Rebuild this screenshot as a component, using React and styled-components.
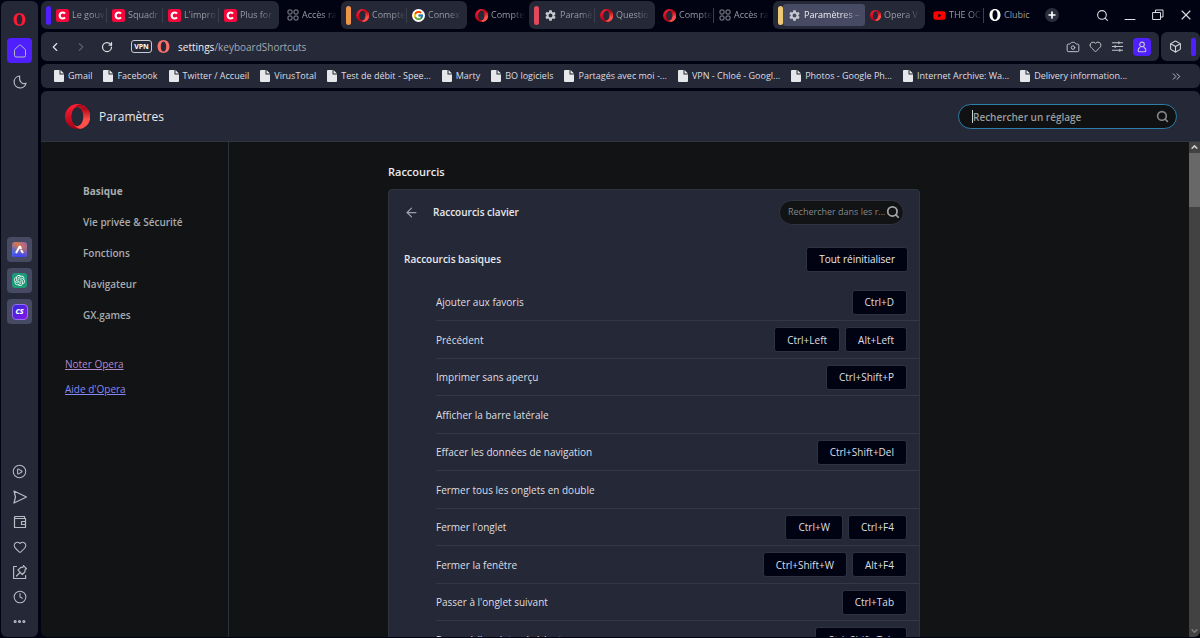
import React from "react";
import styled, { createGlobalStyle } from "styled-components";
import {
	ArrowLeft,
	Box,
	Camera,
	ChevronLeft,
	ChevronRight,
	ChevronsRight,
	CirclePlay,
	Clock4,
	Ellipsis,
	Heart,
	Plus,
	RotateCw,
	Search,
	X,
} from "lucide-react";
import { FaYoutube } from "react-icons/fa";
import { FcGoogle } from "react-icons/fc";
import { MdSettings } from "react-icons/md";
import { SiOpenai } from "react-icons/si";

const tabStrip = [
	{
		color: "#4f1fff",
		tabs: [
			{ icon: "clubic", title: "Le gouv" },
			{ icon: "clubic", title: "Squadr" },
			{ icon: "clubic", title: "L'impro" },
			{ icon: "clubic", title: "Plus for" },
		],
	},
	{ tabs: [{ icon: "grid", title: "Accès ra" }] },
	{
		color: "#f0944a",
		tabs: [
			{ icon: "opera", title: "Compte" },
			{ icon: "google", title: "Connex" },
		],
	},
	{ tabs: [{ icon: "opera", title: "Compte" }] },
	{
		color: "#e2495c",
		tabs: [
			{ icon: "gear", title: "Paramè" },
			{ icon: "opera", title: "Questio" },
		],
	},
	{
		tabs: [
			{ icon: "opera", title: "Compte" },
			{ icon: "grid", title: "Accès ra" },
		],
	},
	{
		color: "#efc873",
		tabs: [
			{ icon: "gear", title: "Paramètres –", active: true },
			{ icon: "operaSmall", title: "Opera V" },
		],
	},
	{
		tabs: [
			{ icon: "youtube", title: "THE OC" },
			{ icon: "operaWhite", title: "Clubic", full: true },
		],
	},
];

const bookmarks = [
	"Gmail",
	"Facebook",
	"Twitter / Accueil",
	"VirusTotal",
	"Test de débit - Spee...",
	"Marty",
	"BO logiciels",
	"Partagés avec moi -...",
	"VPN - Chloé - Googl...",
	"Photos - Google Ph...",
	"Internet Archive: Wa...",
	"Delivery information...",
];

const sections = [
	"Basique",
	"Vie privée & Sécurité",
	"Fonctions",
	"Navigateur",
	"GX.games",
];

const shortcuts = [
	{ label: "Ajouter aux favoris", keys: ["Ctrl+D"] },
	{ label: "Précédent", keys: ["Ctrl+Left", "Alt+Left"] },
	{ label: "Imprimer sans aperçu", keys: ["Ctrl+Shift+P"] },
	{ label: "Afficher la barre latérale", keys: [] },
	{
		label: "Effacer les données de navigation",
		keys: ["Ctrl+Shift+Del"],
	},
	{ label: "Fermer tous les onglets en double", keys: [] },
	{ label: "Fermer l'onglet", keys: ["Ctrl+W", "Ctrl+F4"] },
	{ label: "Fermer la fenêtre", keys: ["Ctrl+Shift+W", "Alt+F4"] },
	{ label: "Passer à l'onglet suivant", keys: ["Ctrl+Tab"] },
	{ label: "Passer à l'onglet précédent", keys: ["Ctrl+Shift+Tab"] },
];

function OperaLogo({ size }) {
	const id = React.useId();
	return (
		<svg width={size} height={size} viewBox="0 0 24 24">
			<defs>
				<linearGradient id={id + "a"} x1="0" y1="0" x2="0" y2="1">
					<stop offset="0" stopColor="#ff2035" />
					<stop offset="1" stopColor="#a70014" />
				</linearGradient>
				<linearGradient id={id + "b"} x1="0" y1="0" x2="0" y2="1">
					<stop offset="0" stopColor="#a80012" />
					<stop offset="0.6" stopColor="#ff4f4a" />
				</linearGradient>
			</defs>
			<path
				fill={`url(#${id}a)`}
				fillRule="evenodd"
				d="M12 0a12 12 0 1 0 0 24 12 12 0 1 0 0-24zm0 3c3.200 0 5.600 4 5.600 9s-2.400 9-5.600 9-5.600-4-5.600-9 2.400-9 5.600-9z"
			/>
			<path
				fill={`url(#${id}b)`}
				d="M8 4.800C9.200 3.400 10.700 2.600 12.300 2.600c3.500 0 6.300 4.200 6.300 9.400s-2.800 9.400-6.300 9.400c-1.600 0-3.100-.8-4.300-2.200 1.900 3 4.800 4.800 7.900 4.500A12 12 0 0 0 20 3.100C18.400 1.600 16.500.600 15 .4 12 .5 9.600 2 8 4.800z"
			/>
			<path
				fill="#252836"
				d="M12 3c3.200 0 5.600 4 5.600 9s-2.400 9-5.600 9-5.600-4-5.600-9 2.400-9 5.600-9z"
			/>
			<path
				fill={`url(#${id}b)`}
				d="M17.600 12c0 5-2.400 9-5.600 9 1 1.500 3 2 4.500 2.100A12 12 0 0 0 20 3.100L15 4.200c1.600 1.600 2.600 4.500 2.600 7.800z"
			/>
		</svg>
	);
}

function OperaRing({ size, color }) {
	return (
		<svg width={size} height={size} viewBox="0 0 24 24">
			<path
				fill={color}
				fillRule="evenodd"
				d="M12 0C5.400 0 1 5.200 1 12s4.400 12 11 12 11-5.200 11-12S18.600 0 12 0zm0 2.600c3.100 0 5 4 5 9.400s-1.900 9.400-5 9.400-5-4-5-9.400 1.900-9.400 5-9.400z"
			/>
		</svg>
	);
}

function GridIcon() {
	return (
		<svg width="12" height="12" viewBox="0 0 12 12" fill="none" stroke="#8d8f99">
			<rect x="1" y="1" width="4" height="4" rx="1" />
			<rect x="7" y="1" width="4" height="4" rx="1" />
			<rect x="1" y="7" width="4" height="4" rx="1" />
			<rect x="7" y="7" width="4" height="4" rx="1" />
		</svg>
	);
}

function ClubicIcon() {
	return (
		<svg width="13" height="13" viewBox="0 0 13 13">
			<rect width="13" height="13" rx="2" fill="#f5063b" />
			<path
				d="M9 4.600A3 3 0 1 0 9 8.400"
				fill="none"
				stroke="#fff"
				strokeWidth="2.2"
			/>
		</svg>
	);
}

function TabIcon({ name }) {
	switch (name) {
		case "clubic":
			return <ClubicIcon />;
		case "grid":
			return <GridIcon />;
		case "google":
			return (
				<RoundIcon>
					<FcGoogle size={11} />
				</RoundIcon>
			);
		case "gear":
			return <MdSettings size={13} color="#c9cad0" />;
		case "youtube":
			return <FaYoutube size={13} color="#ff0000" />;
		case "operaWhite":
			return <OperaRing size={12} color="#ffffff" />;
		case "operaSmall":
			return <OperaLogo size={11} />;
		default:
			return <OperaLogo size={13} />;
	}
}

function FileIcon() {
	return (
		<svg width="10" height="12" viewBox="0 0 10 12">
			<path
				fill="#e6e7ea"
				d="M1 0h4.500v4.500H10V11a1 1 0 0 1-1 1H1a1 1 0 0 1-1-1V1a1 1 0 0 1 1-1zM6.500 0L10 3.500H6.500z"
			/>
		</svg>
	);
}

function LineIcon({ size = 14, width = 1, children }) {
	return (
		<svg
			width={size}
			height={size}
			viewBox="0 0 14 14"
			fill="none"
			stroke="currentColor"
			strokeWidth={width}
			strokeLinejoin="round"
			strokeLinecap="round">
			{children}
		</svg>
	);
}

function Sidebar() {
	return (
		<StyledSidebar>
			<SideGroup $top>
				<SideButton aria-label="Opera">
					<OperaRing size={13} color="#fb1b33" />
				</SideButton>
				<SideButton aria-label="Accueil" $bg="#4f1fff">
					<LineIcon>
						<path d="M1.500 6.200c0-.500.200-.900.600-1.200L6.300 1.300c.400-.400 1-.400 1.400 0L11.900 5c.400.300.600.700.600 1.200v5.300a1.500 1.500 0 0 1-1.500 1.500H3a1.500 1.500 0 0 1-1.500-1.500z" />
					</LineIcon>
				</SideButton>
				<SideButton aria-label="Espace">
					<LineIcon width={1.2}>
						<path d="M6.700 1A6 6 0 1 0 13 8.200c-1.200.600-3.200.600-4.600-.600S6.300 3.400 6.700 1z" />
					</LineIcon>
				</SideButton>
			</SideGroup>
			<SideGroup>
				<SideButton aria-label="Aria" $bg="#464a62">
					<svg width="15" height="15" viewBox="0 0 15 15">
						<defs>
							<linearGradient id="aria" x1="0" y1="1" x2="1" y2="0">
								<stop offset="0" stopColor="#5fc4dc" />
								<stop offset="0.3" stopColor="#7a6fa8" />
								<stop offset="0.6" stopColor="#d9754c" />
								<stop offset="1" stopColor="#8d61b0" />
							</linearGradient>
							<linearGradient id="ariaBlue" x1="0" y1="0" x2="0" y2="1">
								<stop offset="0.3" stopColor="#3b55f0" stopOpacity="0" />
								<stop offset="1" stopColor="#3b40ff" />
							</linearGradient>
						</defs>
						<rect width="15" height="15" rx="3" fill="url(#aria)" />
						<rect width="15" height="15" rx="3" fill="url(#ariaBlue)" />
						<path
							d="M4 11l4-7M8 4l1 3M9 8l2 3"
							stroke="#fff"
							strokeWidth="2"
							fill="none"
						/>
					</svg>
				</SideButton>
				<SideButton aria-label="ChatGPT" $bg="#464a62">
					<GptTile>
						<SiOpenai size={11} />
					</GptTile>
				</SideButton>
				<SideButton aria-label="ChatSonic" $bg="#464a62">
					<SonicTile>CS</SonicTile>
				</SideButton>
			</SideGroup>
			<SideGroup $tight>
				<SideButton aria-label="Lecteur">
					<CirclePlay size={15} strokeWidth={1.7} />
				</SideButton>
				<SideButton aria-label="My Flow">
					<LineIcon width={1.2}>
						<path d="M1 1l12.500 6L1 13l1.500-6z" />
					</LineIcon>
				</SideButton>
				<SideButton aria-label="Portefeuille">
					<LineIcon width={1.2}>
						<path d="M1.500 2.500V12.500h11V3.500H2.500a1 1 0 0 1 0-2H11.500v2M12.500 6.500h-4v3h4" />
					</LineIcon>
				</SideButton>
				<SideButton aria-label="Favoris">
					<Heart size={14} strokeWidth={1.8} />
				</SideButton>
				<SideButton aria-label="Pinboards">
					<LineIcon width={1.2}>
						<path d="M3.500 1.500H.600v12h12V10.500M10.500.600l3 3-1.300.700-.400 2.700-2.500 2.500L5 5.200l2.500-2.500 2.500-.600zM7 7.500L3.500 11" />
					</LineIcon>
				</SideButton>
				<SideButton aria-label="Historique">
					<Clock4 size={14} strokeWidth={1.8} />
				</SideButton>
				<SideButton aria-label="Plus">
					<Ellipsis size={15} strokeWidth={3} />
				</SideButton>
			</SideGroup>
		</StyledSidebar>
	);
}

function TabStrip() {
	return (
		<StyledTabStrip>
			{tabStrip.map((group, i) => (
				<TabGroup key={i} $grouped={!!group.color}>
					{group.color && <GroupMark $color={group.color} />}
					{group.tabs.map((tab, j) => (
						<Tab
							key={j}
							$active={tab.active}
							$full={tab.full}
							$divided={!tab.active && j < group.tabs.length - 1}>
							<TabIcon name={tab.icon} />
							<span>{tab.title}</span>
						</Tab>
					))}
				</TabGroup>
			))}
			<NewTab aria-label="Nouvel onglet">
				<Plus size={10} strokeWidth={4} />
			</NewTab>
			<WindowButtons>
				<button aria-label="Rechercher dans les onglets">
					<Search size={13} strokeWidth={2} />
				</button>
				<button aria-label="Réduire">
					<LineIcon>
						<path d="M2 11.500h10" />
					</LineIcon>
				</button>
				<button aria-label="Restaurer">
					<LineIcon>
						<path d="M2 4.500h7.500v7H2zM4.500 4.500v-2.500H12v7H9.500" />
					</LineIcon>
				</button>
				<button aria-label="Fermer">
					<X size={16} strokeWidth={1.7} />
				</button>
			</WindowButtons>
		</StyledTabStrip>
	);
}

function AddressBar() {
	return (
		<Toolbars>
			<Toolbar>
				<NavButton aria-label="Précédent">
					<ChevronLeft size={14} strokeWidth={2} />
				</NavButton>
				<NavButton aria-label="Suivant" disabled>
					<ChevronRight size={14} strokeWidth={2} />
				</NavButton>
				<NavButton aria-label="Recharger">
					<RotateCw size={12} strokeWidth={2.5} />
				</NavButton>
				<Vpn>VPN</Vpn>
				<OperaRing size={13} color="#f8706a" />
				<Url>
					<b>settings</b>/keyboardShortcuts
				</Url>
				<ToolButtons>
					<button aria-label="Capture">
						<Camera size={14} strokeWidth={1.7} />
					</button>
					<button aria-label="Favoris">
						<Heart size={13} strokeWidth={1.8} />
					</button>
					<button aria-label="Configuration facile">
						<LineIcon size={13} width={1.2}>
							<path d="M1.500 3h11M1.500 7h11M1.500 11h11M8.500 2v2M4.500 6v2M9.500 10v2" />
						</LineIcon>
					</button>
					<ProfileButton aria-label="Profil">
						<LineIcon size={12} width={1.3}>
							<circle cx="7" cy="4" r="2.7" />
							<path d="M4.500 7.700C3 8.500 2.500 9.500 2.500 11c0 1 .500 1.500 1.500 1.500h6c1 0 1.500-.500 1.500-1.500 0-1.500-.500-2.500-2-3.300" />
						</LineIcon>
					</ProfileButton>
				</ToolButtons>
			</Toolbar>
			<Extensions>
				<button aria-label="Extensions">
					<Box size={13} strokeWidth={2} />
				</button>
				<span />
			</Extensions>
		</Toolbars>
	);
}

function SettingsHeader() {
	return (
		<StyledHeader>
			<OperaLogo size={25} />
			<h1>Paramètres</h1>
			<SettingSearch>
				<i />
				<input
					type="text"
					aria-label="Rechercher un réglage"
					placeholder="Rechercher un réglage"
				/>
				<Search size={13} strokeWidth={3} />
			</SettingSearch>
		</StyledHeader>
	);
}

function Shortcuts() {
	return (
		<Content>
			<h2>Raccourcis</h2>
			<Card>
				<CardHeader>
					<button aria-label="Retour">
						<ArrowLeft size={15} strokeWidth={2} />
					</button>
					<h3>Raccourcis clavier</h3>
					<CardSearch>
						<input
							type="text"
							aria-label="Rechercher dans les raccourcis"
							placeholder="Rechercher dans les r..."
						/>
						<Search size={14} strokeWidth={3} />
					</CardSearch>
				</CardHeader>
				<CardSection>
					<h3>Raccourcis basiques</h3>
					<KeyButton>Tout réinitialiser</KeyButton>
				</CardSection>
				<ShortcutList>
					{shortcuts.map((item) => (
						<ShortcutRow key={item.label}>
							<p>{item.label}</p>
							{item.keys.map((key) => (
								<KeyButton key={key}>{key}</KeyButton>
							))}
						</ShortcutRow>
					))}
				</ShortcutList>
			</Card>
		</Content>
	);
}

function App() {
	return (
		<Browser>
			<GlobalStyle />
			<Sidebar />
			<Main>
				<TabStrip />
				<AddressBar />
				<Bookmarks>
					{bookmarks.map((name) => (
						<a href="#" key={name}>
							<FileIcon />
							{name}
						</a>
					))}
					<button aria-label="Plus de favoris">
						<ChevronsRight size={13} strokeWidth={1.5} />
					</button>
				</Bookmarks>
				<Page>
					<SettingsHeader />
					<PageBody>
						<Menu>
							<ul>
								{sections.map((name, i) => (
									<MenuItem key={name} $current={i === 0}>
										<a href="#">{name}</a>
									</MenuItem>
								))}
							</ul>
							<HelpLink href="#" $visited>
								Noter Opera
							</HelpLink>
							<HelpLink href="#">Aide d'Opera</HelpLink>
						</Menu>
						<Shortcuts />
						<Scrollbar>
							<LineIcon size={11} width={2}>
								<path d="M4 8l3-3 3 3" />
							</LineIcon>
							<span />
							<LineIcon size={11} width={2}>
								<path d="M4 5l3 3 3-3" opacity="0.4" />
							</LineIcon>
						</Scrollbar>
					</PageBody>
				</Page>
			</Main>
		</Browser>
	);
}

const GlobalStyle = createGlobalStyle`
	* {
		box-sizing: border-box;
		margin: 0;
		padding: 0;
	}

	body {
		background-color: #010312;
		color: #e8e9ed;
		font-family: "Open Sans", "Noto Sans", sans-serif;
		font-size: 10px;
		line-height: 14px;
	}

	button,
	input {
		font: inherit;
		color: inherit;
		background: none;
		border: none;
		outline: none;
	}

	button {
		display: flex;
		align-items: center;
		justify-content: center;
		cursor: pointer;
	}

	a {
		color: inherit;
		text-decoration: none;
	}

	ul {
		list-style: none;
	}

	svg {
		flex-shrink: 0;
	}
`;

const Browser = styled.div`
	display: flex;
	gap: 3px;
	height: 100vh;
	padding: 1px 0 1px 1px;
	overflow: hidden;
`;

const StyledSidebar = styled.nav`
	display: flex;
	flex-direction: column;
	align-items: center;
	justify-content: space-between;
	width: 37px;
	padding: 6px 0 3px;
	border-radius: 6px;
	background-color: #252836;
	color: #b9bbc4;
`;

const SideGroup = styled.div`
	display: flex;
	flex-direction: column;
	gap: ${(props) => (props.$tight ? "0" : "6px")};
	padding-bottom: ${(props) => (props.$top ? "8px" : "0")};
`;

const SideButton = styled.button`
	width: 25px;
	height: 25px;
	border-radius: 4px;
	background-color: ${(props) => props.$bg || "transparent"};
`;

const GptTile = styled.span`
	display: flex;
	align-items: center;
	justify-content: center;
	width: 15px;
	height: 15px;
	border-radius: 3px;
	background-color: #1f9a78;
	color: white;
`;

const SonicTile = styled.span`
	width: 16px;
	height: 16px;
	border: 1px solid #9a6cf0;
	border-radius: 4px;
	background: linear-gradient(135deg, #2c2bd8, #8a14e8);
	color: white;
	font-size: 7px;
	font-weight: 800;
	font-style: italic;
	line-height: 14px;
`;

const Main = styled.div`
	display: flex;
	flex-direction: column;
	flex: 1;
	min-width: 0;
	gap: 3px;
`;

const StyledTabStrip = styled.header`
	display: flex;
	align-items: center;
	gap: 3px;
	height: 28px;
	color: #999ba5;
	font-size: 9px;
`;

const TabGroup = styled.div`
	display: flex;
	align-items: center;
	height: 28px;
	padding: ${(props) => (props.$grouped ? "0 4px 0 5px" : "0")};
	border-radius: 6px;
	background-color: ${(props) =>
		props.$grouped ? "#252836" : "transparent"};
`;

const GroupMark = styled.span`
	width: 5px;
	height: 19px;
	border-radius: 3px;
	background-color: ${(props) => props.$color};
`;

const Tab = styled.button`
	justify-content: flex-start;
	gap: 3px;
	width: ${(props) => (props.$active ? "82px" : "56px")};
	height: ${(props) => (props.$active ? "22px" : "15px")};
	padding-left: 5px;
	border-right: 1px solid
		${(props) => (props.$divided ? "#3b3e4e" : "transparent")};
	border-radius: ${(props) => (props.$active ? "3px" : "0")};
	background-color: ${(props) =>
		props.$active ? "#464a62" : "transparent"};
	color: ${(props) => (props.$active ? "#eeeef2" : "inherit")};

	> span:last-child {
		flex: 1;
		text-align: left;
		white-space: nowrap;
		mask-image: ${(props) =>
			props.$full
				? "none"
				: "linear-gradient(to right, black 60%, transparent)"};
	}
`;

const RoundIcon = styled.span`
	display: flex;
	flex: none;
	align-items: center;
	justify-content: center;
	width: 13px;
	height: 13px;
	border-radius: 50%;
	background-color: white;
`;

const NewTab = styled.button`
	width: 14px;
	height: 14px;
	margin-left: 2px;
	border-radius: 50%;
	background-color: #2b2e3c;
	color: white;
`;

const WindowButtons = styled.div`
	display: flex;
	gap: 14px;
	margin-left: auto;
	padding-right: 7px;
	color: #dcdde2;

	button {
		width: 14px;
		height: 14px;
	}
`;

const Toolbars = styled.div`
	display: flex;
	gap: 2px;
`;

const Toolbar = styled.div`
	display: flex;
	align-items: center;
	flex: 1;
	height: 29px;
	padding: 0 8px 0 7px;
	border-radius: 6px;
	background-color: #262937;
`;

const NavButton = styled.button`
	width: 14px;
	height: 14px;
	margin-right: 12px;
	color: #e0e1e6;

	&:disabled {
		color: #5a5d6b;
	}
`;

const Vpn = styled.button`
	width: 21px;
	height: 13px;
	margin: 0 5px;
	border: 1px solid #c9cad0;
	border-radius: 3px;
	color: white;
	font-size: 7px;
	font-weight: 700;
`;

const Url = styled.p`
	flex: 1;
	margin-left: 8px;
	color: #a5a7b1;

	b {
		color: #f2f2f5;
		font-weight: 400;
	}
`;

const ToolButtons = styled.div`
	display: flex;
	align-items: center;
	gap: 9px;
	color: #c2c4cc;
`;

const ProfileButton = styled.button`
	width: 18px;
	height: 18px;
	border-radius: 4px;
	background-color: #4f1fff;
`;

const Extensions = styled.div`
	display: flex;
	align-items: center;
	justify-content: space-between;
	width: 39px;
	padding: 0 4px 0 8px;
	border-radius: 6px;
	background-color: #262937;
	color: #d4d5db;

	span {
		width: 5px;
		height: 18px;
		border-radius: 2px;
		background-color: #4f1fff;
	}
`;

const Bookmarks = styled.div`
	display: flex;
	align-items: center;
	gap: 11px;
	height: 24px;
	padding: 0 17px 0 13px;
	border-radius: 6px;
	background-color: #252836;
	color: #dcdde2;
	font-size: 9px;
	white-space: nowrap;

	a {
		display: flex;
		align-items: center;
		gap: 4px;
	}

	button {
		margin-left: auto;
	}
`;

const Page = styled.div`
	display: flex;
	flex-direction: column;
	flex: 1;
	min-height: 0;
	overflow: hidden;
	border-radius: 6px;
	background-color: #111314;
`;

const StyledHeader = styled.div`
	display: flex;
	align-items: center;
	flex-shrink: 0;
	gap: 9px;
	height: 51px;
	padding: 1px 23px 0 24px;
	border-bottom: 1px solid #2c3541;
	background-color: #252836;

	h1 {
		font-size: 12px;
		font-weight: 400;
		line-height: 18px;
	}
`;

const SettingSearch = styled.label`
	display: flex;
	align-items: center;
	width: 219px;
	height: 25px;
	margin-left: auto;
	padding: 0 7px 0 13px;
	border: 1px solid #2b7fa8;
	border-radius: 13px;
	background-color: #0f1112;
	color: #85878a;

	i {
		width: 1px;
		height: 13px;
		background-color: #d0d0d0;
	}

	input {
		flex: 1;
		min-width: 0;
		font-weight: 600;
	}

	input::placeholder {
		color: #9a9c9e;
	}
`;

const PageBody = styled.div`
	display: flex;
	flex: 1;
	min-height: 0;
`;

const Menu = styled.aside`
	display: flex;
	flex-direction: column;
	align-items: flex-start;
	flex-shrink: 0;
	width: 188px;
	padding: 34px 24px;
	border-right: 1px solid #29313c;

	ul {
		padding: 0 0 21px 18px;
	}
`;

const MenuItem = styled.li`
	color: #a9abad;
	font-weight: ${(props) => (props.$current ? 700 : 600)};
	line-height: 31px;
`;

const HelpLink = styled.a`
	color: ${(props) => (props.$visited ? "#b288cc" : "#8587f5")};
	line-height: 25px;
	text-decoration: underline;
`;

const Content = styled.main`
	flex: 1;
	padding: 21px 24px 0 159px;
	overflow: hidden;

	h2 {
		margin-bottom: 8px;
		font-size: 11px;
		font-weight: 600;
		line-height: 18px;
	}

	h3 {
		flex: 1;
		font-size: 10px;
		font-weight: 600;
	}
`;

const Card = styled.section`
	max-width: 532px;
	border: 1px solid #2c3541;
	border-radius: 4px;
	background-color: #252836;
`;

const CardHeader = styled.div`
	display: flex;
	align-items: center;
	gap: 14px;
	height: 44px;
	padding: 0 15px;

	> button {
		color: #9c9ea8;
	}
`;

const CardSearch = styled.label`
	display: flex;
	align-items: center;
	width: 125px;
	height: 25px;
	padding: 0 4px 0 8px;
	border: 1px solid #30343f;
	border-radius: 13px;
	background-color: #111314;
	color: #a2a4a7;

	input {
		width: 104px;
		flex-shrink: 0;
		font-size: 9px;
	}

	input::placeholder {
		color: #85878a;
	}

	/* the glass sits over the end of the placeholder */
	svg {
		margin-left: -6px;
	}
`;

const CardSection = styled.div`
	display: flex;
	align-items: center;
	height: 50px;
	padding: 0 11px 0 15px;
`;

const KeyButton = styled.button`
	height: 25px;
	padding: 0 12px;
	border: 1px solid #2f3341;
	border-radius: 3px;
	background-color: #010312;
	white-space: nowrap;
`;

const ShortcutList = styled.ul`
	padding-left: 47px;
`;

const ShortcutRow = styled.li`
	display: flex;
	align-items: center;
	gap: 5px;
	min-height: 38px;
	padding-right: 12px;
	border-bottom: 1px solid #343845;
	color: #dedfe3;

	&:nth-child(odd) {
		min-height: 37px;
	}

	p {
		flex: 1;
	}
`;

const Scrollbar = styled.div`
	display: flex;
	flex-direction: column;
	width: 11px;
	background-color: #424242;
	color: #d0d0d0;

	span {
		height: 54px;
		margin-bottom: auto;
		background-color: #686868;
	}
`;

export default App;
